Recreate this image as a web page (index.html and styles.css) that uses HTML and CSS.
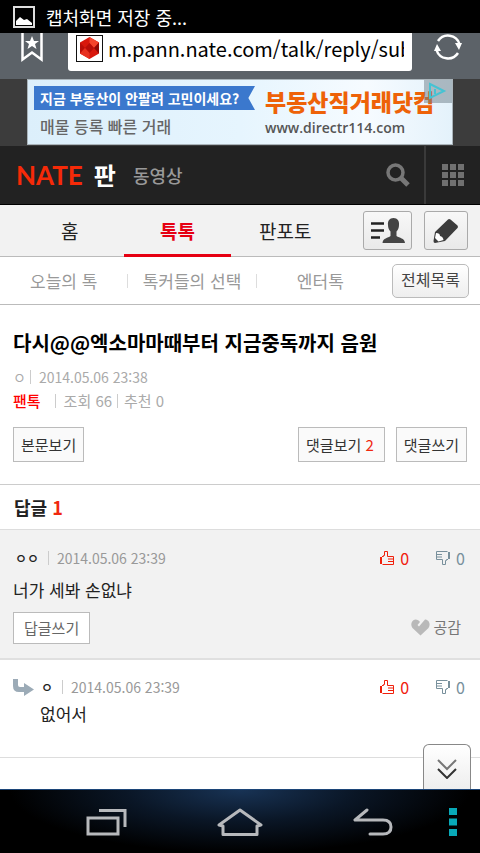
FILE: index.html
```
<!DOCTYPE html>
<html lang="ko">
<head>
  <meta charset="UTF-8">
  <meta name="viewport" content="width=device-width, initial-scale=1.0">
  <title>네이트 판</title>
  <link rel="stylesheet" href="styles.css">
</head>
<body>
  <svg class="defs" width="0" height="0" aria-hidden="true">
    <symbol id="thumb" viewBox="0 0 14 14">
      <path d="M0 6h2v7H0z" fill="currentColor"/>
      <path d="M2 5.500h1.500v-1h1V.5h3v5h6v8H2.500M8 8h5M8 10.500h5" fill="none" stroke="currentColor"/>
    </symbol>
  </svg>

  <div class="status-bar">
    <svg width="22" height="22" viewBox="0 0 22 22">
      <rect x="1" y="1" width="20" height="20" fill="none" stroke="#ddd" stroke-width="2"/>
      <path d="M3 19v-4l4-4 4 3 3-1 5 4v2z" fill="#fff"/>
    </svg>
    <span>캡처화면 저장 중...</span>
  </div>

  <div class="toolbar">
    <button class="icon-btn" aria-label="북마크">
      <svg width="22" height="30" viewBox="0 0 22 30">
        <path d="M1.500 0v26.500l9.500-7 9.500 7V0" fill="none" stroke="#fff" stroke-width="2.500"/>
        <path d="M11 3l2 5h5l-4 3 1.500 5-4.500-3-4.500 3L8 11 4 8h5z" fill="#fff"/>
      </svg>
    </button>
    <div class="url-box">
      <svg width="27" height="27" viewBox="0 0 27 27">
        <rect x=".5" y=".5" width="26" height="26" fill="#fff" stroke="#111"/>
        <path d="M13.500 2L23 7.500v11L13.500 24 4 18.500v-11z" fill="#d8170c"/>
        <path d="M13.500 2L23 7.500 18 13l-4.500-5z" fill="#f5442c"/>
        <path d="M4 7.500L9 13l-5 5.500zM13.500 8L18 13l-4.500 5L9 13z" fill="#b80d08"/>
        <path d="M23 7.500v11L18 13z" fill="#8f0906"/>
        <path d="M4 18.500L9 13l4.500 5v6z" fill="#e83020"/>
      </svg>
      <input class="url" type="text" aria-label="주소" value="m.pann.nate.com/talk/reply/sub">
    </div>
    <button class="icon-btn" aria-label="새로고침">
      <svg width="28" height="28" viewBox="0 0 28 28">
        <path d="M4 8A12 12 0 0 1 25.500 11M24 20A12 12 0 0 1 2.500 17" fill="none" stroke="#fff" stroke-width="2.500"/>
        <path d="M21 10h7l-3 7zM7 18H0l3-7z" fill="#fff"/>
      </svg>
    </button>
  </div>

  <div class="ad">
    <a class="banner" href="#ad">
      <span class="ad-copy">
        <span class="ribbon">지금 부동산이 안팔려 고민이세요?</span>
        <span class="ad-sub">매물 등록 빠른 거래</span>
      </span>
      <span class="ad-brand">
        <strong>부동산직거래닷컴</strong>
        <span class="ad-url">www.directr114.com</span>
      </span>
      <svg class="ad-choice" width="28" height="23" viewBox="0 0 28 23">
        <path d="M6 4l14 7-14 7z" fill="none" stroke="#45c3d3" stroke-width="2"/>
        <path d="M11 9v5" stroke="#45c3d3" stroke-width="2"/>
      </svg>
    </a>
  </div>

  <header>
    <a class="logo" href="#nate">NATE</a>
    <a class="pann" href="#pann">판</a>
    <a class="video" href="#video">동영상</a>
    <button class="icon-btn search" aria-label="검색">
      <svg width="24" height="24" viewBox="0 0 24 24" fill="none" stroke="#777">
        <circle cx="9.500" cy="9.500" r="7.500" stroke-width="3.500"/>
        <path d="M15 15l7 7" stroke-width="5"/>
      </svg>
    </button>
    <button class="icon-btn apps" aria-label="전체 서비스">
      <svg width="22" height="22" viewBox="0 0 22 22" fill="#707070">
        <path d="M0 0h6v6H0zM8 0h6v6H8zM16 0h6v6h-6zM0 8h6v6H0zM8 8h6v6H8zM16 8h6v6h-6zM0 16h6v6H0zM8 16h6v6H8zM16 16h6v6h-6z"/>
      </svg>
    </button>
  </header>

  <nav class="tabs">
    <a href="#home">홈</a>
    <a class="on" href="#talk">톡톡</a>
    <a href="#photo">판포토</a>
    <button class="tab-btn my" aria-label="내 글">
      <svg width="34" height="26" viewBox="0 0 34 26">
        <path d="M0 5.500h13M0 12.500h13M0 19.500h9" stroke="#222" stroke-width="2.500"/>
        <path d="M22.500 0c4 0 6 3 5.500 7 0 3-1 5-2.500 6.500V18c3 2 8 2 8.500 7H11.500c.5-5 5.500-5 8-7v-4.500C18 12 17 10 17 7c-.5-4 1.500-7 5.500-7z" fill="#444"/>
      </svg>
    </button>
    <button class="tab-btn" aria-label="글쓰기">
      <svg width="26" height="26" viewBox="0 0 26 26">
        <path d="M15 1.500q1-1 2.500 0l7 6q1 1.500 0 2.500L12 23l-10 2q-1.500 0-1.500-2L2 14z" fill="#3c3c3c"/>
        <path d="M3 15q4 0 4 3 3 .5 3.500 4l-5 1.500L2 20z" fill="#fff"/>
      </svg>
    </button>
  </nav>

  <nav class="subtabs">
    <a href="#today">오늘의 톡</a>
    <a href="#choice">톡커들의 선택</a>
    <a href="#enter">엔터톡</a>
    <button class="list-btn">전체목록</button>
  </nav>

  <main>
    <article class="post">
      <h1>다시@@엑소마마때부터 지금중독까지 음원</h1>
      <p class="meta"><span class="writer">ㅇ</span><span class="bar date">2014.05.06 23:38</span></p>
      <p class="meta counts"><a class="channel" href="#fan">팬톡</a><span class="bar views">조회 66</span><span class="bar likes">추천 0</span></p>
      <div class="actions">
        <button class="box-btn">본문보기</button>
        <button class="box-btn view">댓글보기 <em>2</em></button>
        <button class="box-btn">댓글쓰기</button>
      </div>
    </article>

    <h2>답글 <em>1</em></h2>

    <section class="comment">
      <div class="comment-head">
        <span class="name">ㅇㅇ</span>
        <span class="bar date">2014.05.06 23:39</span>
        <button class="vote up" aria-label="추천 0"><svg width="14" height="14"><use href="#thumb"/></svg>0</button>
        <button class="vote down" aria-label="반대 0"><svg width="14" height="14"><use href="#thumb"/></svg>0</button>
      </div>
      <p>너가 세봐 손없냐</p>
      <div class="comment-foot">
        <button class="box-btn write">답글쓰기</button>
        <button class="agree">
          <svg width="19" height="17" viewBox="0 0 19 17">
            <path d="M9.500 16.500L1.500 9C-1 6 .5 1 4.500.5c2 0 3.500 1 4.500 2.500L6.500 6l1.500 1.500 6-7c4 0 6 5 3.500 8.500z" fill="#b9b9b9"/>
          </svg>공감
        </button>
      </div>
    </section>

    <section class="comment reply">
      <div class="comment-head">
        <svg class="arrow" width="21" height="17" viewBox="0 0 21 17">
          <path d="M0 0h5v6q0 2 2 2h4V4l10 6.500-10 6.500v-4H6q-6 0-6-6z" fill="#9cabb7"/>
        </svg>
        <span class="name">ㅇ</span>
        <span class="bar date">2014.05.06 23:39</span>
        <button class="vote up" aria-label="추천 0"><svg width="14" height="14"><use href="#thumb"/></svg>0</button>
        <button class="vote down" aria-label="반대 0"><svg width="14" height="14"><use href="#thumb"/></svg>0</button>
      </div>
      <p>없어서</p>
    </section>

    <button class="to-bottom" aria-label="맨 아래로">
      <svg width="20" height="20" viewBox="0 0 20 20" fill="none" stroke-width="2">
        <path d="M1 1l9 9 9-9" stroke="#777"/>
        <path d="M1 10l9 9 9-9" stroke="#333"/>
      </svg>
    </button>
  </main>

  <footer>
    <button class="icon-btn recent" aria-label="최근 앱">
      <svg width="42" height="28" viewBox="0 0 42 28" fill="none" stroke="#b7b9bc" stroke-width="3">
        <path d="M2 10h30v16H2z"/>
        <path d="M13 2.500h26V19"/>
      </svg>
    </button>
    <button class="icon-btn" aria-label="홈">
      <svg width="46" height="28" viewBox="0 0 46 28" fill="none" stroke="#b7b9bc" stroke-width="3" stroke-linejoin="round">
        <path d="M6 18l-4-1L23 2l21 15-4 1v8.500H6z"/>
      </svg>
    </button>
    <button class="icon-btn" aria-label="뒤로">
      <svg width="40" height="28" viewBox="0 0 40 28" fill="none" stroke="#b7b9bc" stroke-width="3" stroke-linejoin="round" stroke-linecap="round">
        <path d="M14 2L2 12h28q8 0 8 7t-8 7H17"/>
      </svg>
    </button>
    <button class="icon-btn more" aria-label="메뉴">
      <svg width="8" height="28" viewBox="0 0 8 28" fill="#08a9b8">
        <path d="M0 0h8v7H0zM0 10.500h8v7H0zM0 21h8v7H0z"/>
      </svg>
    </button>
  </footer>
</body>
</html>
```

FILE: styles.css
```
* {
  box-sizing: border-box;
}

body {
  margin: 0;
  min-height: 100vh;
  display: flex;
  flex-direction: column;
  font-family: "Noto Sans CJK KR", sans-serif;
  font-size: 15px;
  line-height: 24px;
  color: #222;
  background: #fff;
}

a {
  color: inherit;
  text-decoration: none;
}

button {
  margin: 0;
  padding: 0;
  border: none;
  background: none;
  font: inherit;
  color: inherit;
  white-space: nowrap;
  cursor: pointer;
}

svg {
  display: block;
  flex: none;
}

h1, h2, p {
  margin: 0;
}

em {
  font-style: normal;
  color: #f0280f;
}

.defs {
  position: absolute;
}

/* phone status bar + browser toolbar */
.status-bar {
  display: flex;
  align-items: center;
  gap: 11px;
  height: 33px;
  padding: 0 13px;
  background: #000;
  color: #fff;
  font-size: 18px;
}

.toolbar {
  display: flex;
  align-items: flex-start;
  padding: 0 18px 8px 21px;
  background: #5c6268;
}

.url-box {
  flex: 1;
  display: flex;
  align-items: center;
  gap: 5px;
  height: 38px;
  min-width: 0;
  margin: 0 22px 0 25px;
  padding: 0 8px 8px;
  background: #fff;
  border-radius: 0 0 3px 3px;
}

.url {
  flex: 1;
  min-width: 0;
  height: 30px;
  padding: 0;
  border: none;
  outline: none;
  background: none;
  font-family: "Noto Sans CJK KR", sans-serif;
  font-size: 20px;
  color: #000;
}

/* ad */
.ad {
  padding: 0 27px 1px;
  background: #3c3c3c;
}

.banner {
  position: relative;
  display: flex;
  gap: 10px;
  height: 66px;
  padding: 6px;
  border: 1px solid #aab4ba;
  background: linear-gradient(90deg, #dceffb, #e6f5fe 50%, #f6fbff 80%, #e4f2fb);
}

.ad-copy, .ad-brand {
  display: flex;
  flex-direction: column;
  white-space: nowrap;
}

.ribbon {
  width: 221px;
  padding-left: 6px;
  font-size: 14px;
  font-weight: bold;
  color: #fff;
  background: #3b78cd;
  clip-path: polygon(0 0, 100% 0, 97% 50%, 100% 100%, 0 100%);
}

.ad-sub {
  padding: 4px 6px;
  font-size: 16px;
  font-weight: 500;
  color: #666;
}

.ad-brand strong {
  padding-top: 3px;
  font-size: 23px;
  font-weight: 900;
  color: #ee6208;
}

.ad-url {
  padding-top: 4px;
  line-height: 22px;
  font-family: "Open Sans", sans-serif;
  font-size: 14px;
  font-weight: 600;
  color: #555;
}

.ad-choice {
  position: absolute;
  top: 0;
  right: 0;
  background: rgba(110, 125, 135, 0.5);
}

/* site header */
header {
  display: flex;
  align-items: center;
  height: 59px;
  padding-left: 16px;
  background: #222;
  border-bottom: 1px solid #000;
}

.logo {
  font-family: Lato, sans-serif;
  font-size: 26px;
  font-weight: bold;
  color: #f62a08;
}

.pann {
  margin-left: 11px;
  font-size: 24px;
  font-weight: bold;
  color: #fff;
}

.video {
  margin-left: 17px;
  font-size: 18px;
  font-weight: 500;
  color: #999;
}

.search {
  margin: 0 14px 0 auto;
}

.apps {
  align-self: stretch;
  padding: 0 16px;
  border-left: 2px solid #3a3a3a;
}

/* tabs */
.tabs {
  display: flex;
  align-items: center;
  height: 52px;
  padding: 0 12px 0 16px;
  font-size: 19px;
  background: #f2f2f2;
  border-bottom: 1px solid #bbb;
}

.tabs a {
  flex: 1;
  height: 52px;
  line-height: 52px;
  text-align: center;
}

.tabs .on {
  font-weight: bold;
  color: #e60012;
  border-bottom: 3px solid #e60012;
}

.tab-btn {
  display: flex;
  align-items: center;
  justify-content: center;
  width: 44px;
  height: 39px;
  border: 1px solid #aaa;
  border-radius: 3px;
  background: linear-gradient(#f8f8f8, #e9e9e9);
}

.my {
  width: 49px;
  margin: 0 12px 0 24px;
}

.subtabs {
  display: flex;
  align-items: center;
  height: 48px;
  padding-right: 11px;
  font-size: 17px;
  color: #999;
  border-bottom: 1px solid #bbb;
}

.subtabs a {
  flex: 1;
  line-height: 14px;
  text-align: center;
  white-space: nowrap;
}

.subtabs a + a {
  border-left: 1px solid #ddd;
}

.list-btn {
  width: 77px;
  height: 34px;
  margin-left: 8px;
  padding-bottom: 4px;
  font-size: 16px;
  color: #444;
  border: 1px solid #bbb;
  border-radius: 5px;
  background: linear-gradient(#fff, #eee);
}

/* post */
main {
  position: relative;
  flex: 1;
}

.post {
  padding: 24px 13px 22px;
  border-bottom: 1px solid #ccc;
}

h1 {
  margin-bottom: 8px;
  font-size: 20px;
  line-height: 28px;
  color: #000;
}

.meta {
  display: flex;
  align-items: center;
  font-size: 14px;
  color: #aaa;
}

.counts {
  font-size: 15px;
}

.bar {
  padding-left: 8px;
  line-height: 14px;
  border-left: 1px solid #ccc;
}

.writer {
  margin-right: 4px;
}

.channel {
  margin-right: 14px;
  font-weight: 500;
  color: #f00;
}

.views {
  margin-right: 5px;
}

.likes {
  padding-left: 6px;
}

.actions {
  display: flex;
  margin-top: 14px;
}

.box-btn {
  height: 35px;
  padding: 0 7px;
  color: #333;
  border: 1px solid #bbb;
  background: #fafafa;
}

.view {
  margin: 0 11px 0 auto;
  padding-right: 10px;
}

h2 {
  padding: 0 14px;
  font-size: 18px;
  line-height: 44px;
  border-bottom: 1px solid #ddd;
}

/* comments */
.comment {
  padding: 16px 15px 14px 13px;
  background: #f2f2f2;
  border-bottom: 2px solid #e0e0e0;
}

.comment p {
  margin-top: 6px;
  font-size: 17px;
  line-height: 28px;
}

.comment-head, .comment-foot {
  display: flex;
  align-items: center;
}

.name {
  margin: 0 9px 0 2px;
  font-size: 13px;
  font-weight: 500;
}

.date {
  margin-right: auto;
  font-size: 14px;
}

.comment .date {
  color: #999;
}

.vote {
  display: flex;
  align-items: center;
  gap: 6px;
  font-size: 16px;
}

.up {
  margin-right: 27px;
  color: #f0200c;
}

.down {
  color: #78909c;
}

.down svg {
  transform: rotate(180deg);
}

.comment-foot {
  justify-content: space-between;
  margin-top: 8px;
}

.write {
  height: 32px;
  padding: 0 10px;
  color: #666;
  background: #fff;
}

.agree {
  display: flex;
  align-items: center;
  gap: 3px;
  padding: 0 4px 2px 0;
  color: #777;
}

.reply {
  padding-top: 15px;
  padding-bottom: 29px;
  background: #fff;
  border-bottom: 1px solid #ddd;
}

.reply p {
  margin-top: 1px;
  padding-left: 27px;
}

.arrow {
  margin-right: 5px;
}

.to-bottom {
  position: absolute;
  right: 9px;
  bottom: 0;
  display: flex;
  justify-content: center;
  width: 48px;
  height: 45px;
  padding-top: 14px;
  border: 1px solid #888;
  border-bottom: none;
  border-radius: 6px 6px 0 0;
  background: linear-gradient(#fff, #eee);
}

/* phone navigation keys */
footer {
  display: grid;
  grid-template-columns: 40px 1fr 1fr 1fr 40px;
  height: 64px;
  border-top: 1px solid #1c4578;
  background: radial-gradient(ellipse 48% 100% at 50% 0, #183355, #0a1626 50%, #000);
}

footer .icon-btn {
  display: flex;
  align-items: center;
  justify-content: center;
}

.recent {
  grid-column: 2;
}

footer .more {
  justify-content: flex-start;
  padding-left: 9px;
}
```
